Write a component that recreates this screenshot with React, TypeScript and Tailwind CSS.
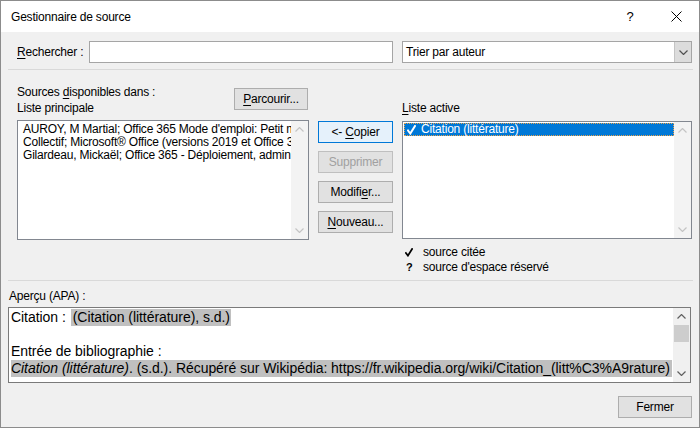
import React from "react";

const Chev = ({ dir, color }: { dir: "up" | "down"; color: string }) => (
  <svg width="9" height="5" viewBox="0 0 9 5">
    <path
      d={dir === "up" ? "M0.5 4.5 L4.5 0.5 L8.5 4.5" : "M0.5 0.5 L4.5 4.5 L8.5 0.5"}
      fill="none"
      stroke={color}
      strokeWidth="1.2"
    />
  </svg>
);

const Check = ({ color }: { color: string }) => (
  <svg width="9" height="10" viewBox="0 0 9 10">
    <path d="M1 5.5 L3.3 8.5 L8 1" fill="none" stroke={color} strokeWidth="2" strokeLinecap="square" />
  </svg>
);

const Btn = ({ children, className = "" }: { children: React.ReactNode; className?: string }) => (
  <div className={`h-[22px] border flex items-center justify-center shrink-0 ${className}`}>{children}</div>
);

export default function App() {
  return (
    <div className="w-[700px] h-[428px] border border-[#8c8c8c] bg-[#f0f0f0] flex flex-col text-[12px] text-black font-['Liberation_Sans',Arial,sans-serif] tracking-[-0.2px] overflow-hidden">
      {/* Title bar */}
      <div className="h-[31px] bg-white flex items-center shrink-0">
        <span className="flex-1 pl-[10px]">Gestionnaire de source</span>
        <span className="w-[46px] text-center text-[13px]">?</span>
        <span className="w-[46px] flex items-center justify-center">
          <svg width="11" height="11" viewBox="0 0 11 11">
            <path d="M0.5 0.5 L10.5 10.5 M10.5 0.5 L0.5 10.5" stroke="#000" strokeWidth="1" />
          </svg>
        </span>
      </div>

      {/* Search row */}
      <div className="flex items-center pl-[16px] mt-[9px] shrink-0">
        <span className="w-[72px]">
          <span className="underline underline-offset-2">R</span>echercher :
        </span>
        <div className="w-[304px] h-[22px] border border-[#a5a5a5] bg-white" />
        <div className="ml-[9px] w-[290px] h-[22px] border border-[#a5a5a5] bg-white flex">
          <span className="flex-1 pl-[3px] leading-[20px]">Trier par auteur</span>
          <div className="w-[17px] h-full bg-[#dcdcdc] border-l border-[#c4c4c4] flex items-center justify-center">
            <Chev dir="down" color="#505050" />
          </div>
        </div>
      </div>

      {/* separator */}
      <div className="ml-[7px] w-[685px] h-px bg-[#d9d9d9] mt-[6px] shrink-0" />

      {/* Main */}
      <div className="flex pl-[16px] mt-[14px] shrink-0">
        {/* left */}
        <div className="w-[292px] flex flex-col">
          <div className="flex justify-between items-start pr-[1px]">
            <div className="leading-[16px]">
              <div>
                Sources <span className="underline underline-offset-2">d</span>isponibles dans :
              </div>
              <div>Liste principale</div>
            </div>
            <Btn className="w-[74px] mt-[4px] border-[#adadad] bg-[#e1e1e1]">
              <span>
                <span className="underline underline-offset-2">P</span>arcourir...
              </span>
            </Btn>
          </div>
          <div className="mt-[4px] h-[120px] border border-[#828790] bg-white flex">
            <div className="flex-1 overflow-hidden whitespace-nowrap pl-[5px] pt-[2px] leading-[13px]">
              <div>AUROY, M Martial; Office 365 Mode d'emploi: Petit manuel</div>
              <div>Collectif; Microsoft® Office (versions 2019 et Office 365)</div>
              <div>Gilardeau, Mickaël; Office 365 - Déploiement, administration</div>
            </div>
            <div className="w-[17px] bg-[#f3f3f3] flex flex-col items-center justify-between py-[6px]">
              <Chev dir="up" color="#c4c4c4" />
              <Chev dir="down" color="#c4c4c4" />
            </div>
          </div>
        </div>

        {/* middle */}
        <div className="ml-[9px] w-[75px] pt-[37px] flex flex-col gap-[8px]">
          <Btn className="border-[#0078d7] bg-[#e5f1fb]">
            <span>
              &lt;- <span className="underline underline-offset-2">C</span>opier
            </span>
          </Btn>
          <Btn className="border-[#bfbfbf] bg-[#e1e1e1] text-[#a0a0a0]">Supprimer</Btn>
          <Btn className="border-[#adadad] bg-[#e1e1e1]">
            <span>
              Modifi<span className="underline underline-offset-2">e</span>r...
            </span>
          </Btn>
          <Btn className="border-[#adadad] bg-[#e1e1e1]">
            <span>
              <span className="underline underline-offset-2">N</span>ouveau...
            </span>
          </Btn>
        </div>

        {/* right */}
        <div className="ml-[9px] w-[290px] flex flex-col pt-[16px]">
          <div className="leading-[16px]">
            <span className="underline underline-offset-2">L</span>iste active
          </div>
          <div className="mt-[5px] h-[118px] border border-[#828790] bg-white flex">
            <div className="flex-1 pt-px pl-px">
              <div className="h-[13px] bg-[#0078d7] border border-dotted border-[#e9a24b] text-white flex items-center pl-[2px] leading-[11px] whitespace-nowrap">
                <Check color="#ffffff" />
                <span className="ml-[5px]">Citation (littérature)</span>
              </div>
            </div>
            <div className="w-[17px] bg-[#f3f3f3] flex flex-col items-center justify-between py-[6px]">
              <Chev dir="up" color="#c4c4c4" />
              <Chev dir="down" color="#c4c4c4" />
            </div>
          </div>
          <div className="mt-[6px] leading-[15px] pl-[3px]">
            <div className="flex items-center h-[15px]">
              <span className="w-[18px] flex">
                <svg width="8" height="9" viewBox="0 0 9 10">
                  <path d="M1 5.5 L3.3 8.5 L8 1" fill="none" stroke="#000" strokeWidth="2" strokeLinecap="square" />
                </svg>
              </span>
              <span>source citée</span>
            </div>
            <div className="flex items-center h-[15px]">
              <span className="w-[18px] font-bold pl-px text-[11px]">?</span>
              <span>source d'espace réservé</span>
            </div>
          </div>
        </div>
      </div>

      {/* separator 2 */}
      <div className="ml-[7px] w-[685px] h-px bg-[#d9d9d9] mt-[5px] shrink-0" />

      {/* Preview */}
      <div className="ml-[8px] mt-[8px] leading-[15px] shrink-0">Aperçu (APA) :</div>
      <div className="ml-[7px] mt-[3px] w-[683px] h-[76px] border border-[#7a7a7a] bg-white flex shrink-0">
        <div className="flex-1 overflow-hidden pl-[2px] pt-px text-[14px] leading-[17px] tracking-[-0.05px] whitespace-nowrap">
          <div>
            Citation :
            <span className="inline-block ml-[5px] pl-[2px] pr-px bg-[#c0c0c0]">(Citation (littérature), s.d.)</span>
          </div>
          <div className="h-[17px]" />
          <div>Entrée de bibliographie :</div>
          <div>
            <span className="inline-block bg-[#c0c0c0] pr-[2px]">
              <i>Citation (littérature)</i>. (s.d.). Récupéré sur Wikipédia: https://fr.wikipedia.org/wiki/Citation_(litt%C3%A9rature)
            </span>
          </div>
        </div>
        <div className="w-[17px] bg-[#f0f0f0] flex flex-col items-center">
          <div className="h-[17px] flex items-center justify-center">
            <Chev dir="up" color="#606060" />
          </div>
          <div className="w-[15px] h-[17px] bg-[#cdcdcd]" />
          <div className="flex-1" />
          <div className="h-[17px] flex items-center justify-center">
            <Chev dir="down" color="#606060" />
          </div>
        </div>
      </div>

      {/* Footer */}
      <div className="flex justify-end mr-[7px] mt-[13px] shrink-0">
        <Btn className="w-[74px] border-[#adadad] bg-[#e1e1e1]">Fermer</Btn>
      </div>
    </div>
  );
}
